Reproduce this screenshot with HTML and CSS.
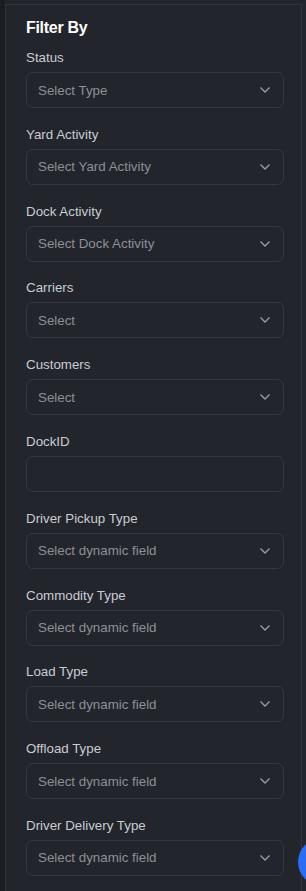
FILE: index.html
```html
<!DOCTYPE html>
<html>
<head>
<meta charset="utf-8">
<link rel="stylesheet" href="styles.css">
</head>
<body>
<div class="shell">
  <div class="strip"></div>
  <aside class="panel">
    <h2 class="title">Filter By</h2>
    <div class="fields">
      <div class="field"><label class="label">Status</label><div class="select"><span class="ph">Select Type</span><svg class="chev" viewBox="0 0 10 6"><path d="M0.5 0.5 L5 5 L9.5 0.5"/></svg></div></div>
      <div class="field"><label class="label">Yard Activity</label><div class="select"><span class="ph">Select Yard Activity</span><svg class="chev" viewBox="0 0 10 6"><path d="M0.5 0.5 L5 5 L9.5 0.5"/></svg></div></div>
      <div class="field"><label class="label">Dock Activity</label><div class="select"><span class="ph">Select Dock Activity</span><svg class="chev" viewBox="0 0 10 6"><path d="M0.5 0.5 L5 5 L9.5 0.5"/></svg></div></div>
      <div class="field"><label class="label">Carriers</label><div class="select"><span class="ph">Select</span><svg class="chev" viewBox="0 0 10 6"><path d="M0.5 0.5 L5 5 L9.5 0.5"/></svg></div></div>
      <div class="field"><label class="label">Customers</label><div class="select"><span class="ph">Select</span><svg class="chev" viewBox="0 0 10 6"><path d="M0.5 0.5 L5 5 L9.5 0.5"/></svg></div></div>
      <div class="field"><label class="label">DockID</label><div class="select input"></div></div>
      <div class="field"><label class="label">Driver Pickup Type</label><div class="select"><span class="ph">Select dynamic field</span><svg class="chev" viewBox="0 0 10 6"><path d="M0.5 0.5 L5 5 L9.5 0.5"/></svg></div></div>
      <div class="field"><label class="label">Commodity Type</label><div class="select"><span class="ph">Select dynamic field</span><svg class="chev" viewBox="0 0 10 6"><path d="M0.5 0.5 L5 5 L9.5 0.5"/></svg></div></div>
      <div class="field"><label class="label">Load Type</label><div class="select"><span class="ph">Select dynamic field</span><svg class="chev" viewBox="0 0 10 6"><path d="M0.5 0.5 L5 5 L9.5 0.5"/></svg></div></div>
      <div class="field"><label class="label">Offload Type</label><div class="select"><span class="ph">Select dynamic field</span><svg class="chev" viewBox="0 0 10 6"><path d="M0.5 0.5 L5 5 L9.5 0.5"/></svg></div></div>
      <div class="field"><label class="label">Driver Delivery Type</label><div class="select"><span class="ph">Select dynamic field</span><svg class="chev" viewBox="0 0 10 6"><path d="M0.5 0.5 L5 5 L9.5 0.5"/></svg></div></div>
    </div>
  </aside>
</div>
<div class="fab"></div>
</body>
</html>
```
FILE: styles.css
```css
html, body {
  margin: 0;
  padding: 0;
  background: #22252c;
  height: 891px;
  overflow: hidden;
}
body {
  font-family: "Liberation Sans", Arial, sans-serif;
}
.shell {
  display: flex;
  height: 891px;
}
.strip {
  width: 5px;
  flex: none;
  background: #1b1d22;
}
.panel {
  margin-top: 4px;
  width: 297px;
  flex: none;
  border-top: 1px solid #30343f;
  border-left: 1px solid #30343f;
  border-right: 1px solid #30343f;
  box-sizing: border-box;
  padding: 12px 17px 0 20px;
}
.title {
  margin: 0;
  font-size: 16px;
  font-weight: 700;
  color: #ffffff;
  line-height: 22px;
  letter-spacing: -0.3px;
}
.fields {
  display: flex;
  flex-direction: column;
  gap: 16.8px;
  margin-top: 9px;
}
.field {
  display: flex;
  flex-direction: column;
  gap: 4px;
}
.label {
  font-size: 13.33px;
  line-height: 20px;
  color: #c9ccd2;
}
.select {
  height: 36px;
  box-sizing: border-box;
  border: 1px solid #343844;
  border-radius: 7px;
  display: flex;
  align-items: center;
  justify-content: space-between;
  padding: 0 13px 0 11px;
}
.ph {
  font-size: 13.33px;
  color: #8d9097;
}
.chev {
  width: 10px;
  height: 6px;
  fill: none;
  stroke: #9a9da4;
  stroke-width: 1.3;
}
.fab {
  position: fixed;
  left: 298px;
  top: 838px;
  width: 48px;
  height: 48px;
  border-radius: 50%;
  background: #2a6cf4;
}
```
